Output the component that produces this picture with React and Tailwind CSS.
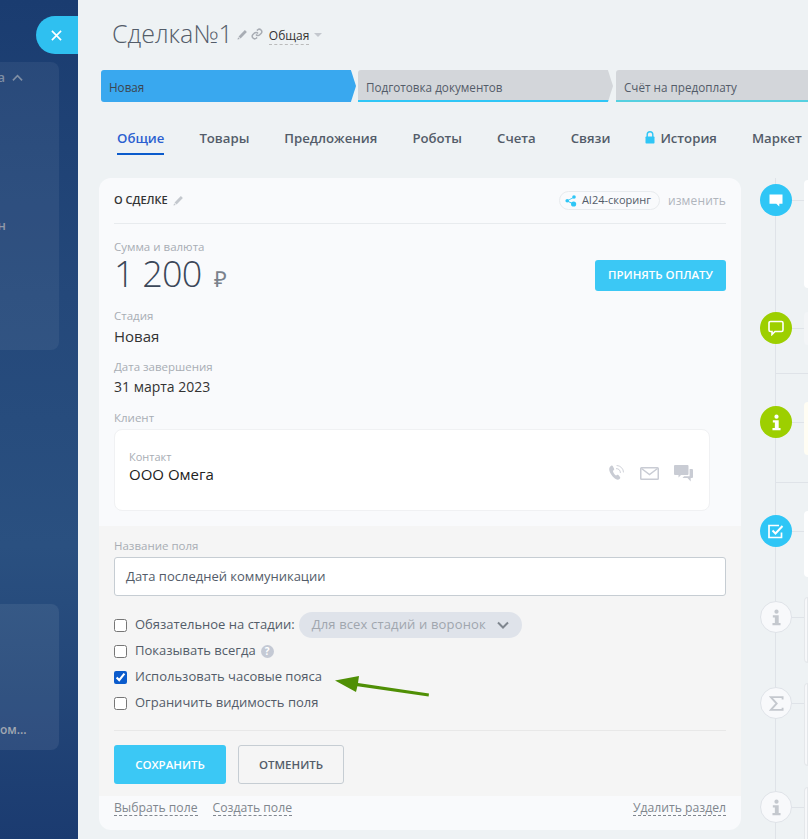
import React from "react";

const Pencil = ({ className }) => (
  <svg viewBox="0 0 12 12" className={className} fill="currentColor">
    <path d="M8.6 1.2l2.2 2.2-6.9 6.9-2.2-2.2zM1.2 8.9l1.9 1.9-2.6.7z" />
  </svg>
);

const Dot = ({ kind, tone }) => {
  const bg =
    tone === "blue"
      ? "bg-[#2fc6f6] text-white"
      : tone === "green"
      ? "bg-[#9dcf00] text-white"
      : "bg-[#f8f9fb] border border-[#dfe3e8] text-[#c4c8ce]";
  return (
    <div className={`relative z-10 w-8 h-8 shrink-0 rounded-full flex items-center justify-center ${bg}`}>
      {kind === "comment" && (
        <svg viewBox="0 0 14 13" className="w-[14px] h-[13px]" fill="currentColor">
          <path d="M0.5 0.5h13v9.3h-3.2v2.7l-3-2.7H0.5z" />
        </svg>
      )}
      {kind === "chat" && (
        <svg viewBox="0 0 16 16" className="w-4 h-4" fill="none" stroke="currentColor" strokeWidth="1.6">
          <path d="M2.5 1.5h11a1.5 1.5 0 0 1 1.5 1.5v7a1.5 1.5 0 0 1-1.5 1.5H7l-3 3v-3H2.5A1.5 1.5 0 0 1 1 10V3a1.5 1.5 0 0 1 1.5-1.5z" />
        </svg>
      )}
      {kind === "info" && (
        <svg viewBox="0 0 12 18" className="w-[11px] h-[17px]" fill="currentColor">
          <circle cx="6" cy="2.6" r="2.3" />
          <path d="M2 6.6h6.4v8.4H10.4v2.4H1.6v-2.4h2.6V9H2z" />
        </svg>
      )}
      {kind === "task" && (
        <svg viewBox="0 0 16 15" className="w-4 h-[15px]" fill="none" stroke="currentColor" strokeWidth="1.7">
          <path d="M13.5 8.5v5H1v-12h10" />
          <path d="M4.5 6.5l3 3 7-7.5" strokeWidth="2" />
        </svg>
      )}
      {kind === "sum" && (
        <svg viewBox="0 0 16 16" className="w-[15px] h-[15px]" fill="none" stroke="currentColor" strokeWidth="2">
          <path d="M14.5 3.6V1.2H2L8.2 8 2 14.8h12.5v-2.4" />
        </svg>
      )}
    </div>
  );
};

const TimeRow = ({ kind, tone, mt, h, card, dotMt }) => (
  <div className={`flex items-start ${mt} ${h}`}>
    <div className={`relative flex items-center ${dotMt}`}>
      <Dot kind={kind} tone={tone} />
      <div className="w-3 h-px bg-[#dfe3e8]" />
    </div>
    <div className={`flex-1 h-full rounded-l-xl ${card}`} />
  </div>
);

const Stage = ({ className, text, clip, line, textClass }) => (
  <div className={`relative h-8 shrink-0 ${clip} ${className}`}>
    <span className={`absolute left-2 top-[9px] text-[11.7px] leading-4 font-medium whitespace-nowrap ${textClass}`}>{text}</span>
    {line && <div className={`absolute left-0 right-0 bottom-0 h-[2px] ${line}`} />}
  </div>
);

const Check = ({ checked, children }) => (
  <label className="flex items-center h-[26px] text-[13px] text-[#535c69]">
    <input type="checkbox" defaultChecked={checked} className="w-[13px] h-[13px] m-0 mr-2 accent-[#0b5bcc]" />
    {children}
  </label>
);

const Dashed = ({ children, className = "" }) => (
  <span className={`text-[12.2px] leading-[15px] text-[#80868e] border-b border-dashed border-[#80868e] ${className}`}>{children}</span>
);

export default function App() {
  return (
    <div className="relative w-[808px] h-[839px] overflow-hidden flex bg-[#eef2f4] font-['Open_Sans',sans-serif]">
      {/* dark backdrop */}
      <aside className="relative w-[78px] h-full shrink-0 overflow-hidden bg-[linear-gradient(180deg,#1a3c70_0%,#24487a_35%,#2a5080_65%,#1b3b70_100%)]">
        <div className="absolute inset-0 [clip-path:polygon(100%_67.6%,100%_100%,0_100%,0_74%)] bg-[linear-gradient(180deg,rgba(255,255,255,0.09),rgba(255,255,255,0)_30%)]" />
        <div className="relative mt-[62px] w-[59px] h-[288px] rounded-r-lg bg-white/[0.06]">
          <div className="flex items-center h-4 pt-2 box-content text-[13px] font-semibold text-[#7f8ea4]">
            <span className="w-[5px] overflow-hidden flex justify-end">а</span>
            <svg viewBox="0 0 12 8" className="w-[11px] h-2 ml-[7px]" fill="none" stroke="#7f8ea4" strokeWidth="1.8">
              <path d="M1 6.5L6 1.5l5 5" />
            </svg>
          </div>
          <div className="mt-[129px] h-5 w-[6px] overflow-hidden flex justify-end text-[13px] font-semibold leading-5 text-[#8f99a8]">н</div>
        </div>
        <div className="relative mt-[254px] w-[59px] h-[146px] rounded-r-lg bg-white/[0.07] flex items-end pb-[10px]">
          <span className="text-[12px] leading-5 font-semibold text-[#a1a8b2]">ом...</span>
        </div>
      </aside>

      {/* close tab */}
      <div className="absolute left-[36px] top-4 w-[42px] h-[38px] rounded-l-full bg-[#2fc0f0] flex items-center justify-center pr-[1px]">
        <svg viewBox="0 0 12 12" className="w-[11px] h-[11px]" fill="none" stroke="white" strokeWidth="1.8">
          <path d="M1 1l10 10M11 1L1 11" />
        </svg>
      </div>

      <main className="flex-1 min-w-0 overflow-hidden">
        {/* title */}
        <div className="flex items-center h-[70px] pl-[34px] pb-[5px]">
          <h1 className="text-[25px] leading-9 font-light text-[#535c69]">Сделка№1</h1>
          <Pencil className="w-[11px] h-[11px] ml-[4px] mt-[3px] text-[#a8adb4]" />
          <svg viewBox="0 0 24 24" className="w-[12px] h-[12px] ml-[3px] mt-[3px]" fill="none" stroke="#a8adb4" strokeWidth="3">
            <path d="M10 13a5 5 0 0 0 7.5.5l3-3a5 5 0 0 0-7-7l-1.7 1.7" />
            <path d="M14 11a5 5 0 0 0-7.5-.5l-3 3a5 5 0 0 0 7 7l1.7-1.7" />
          </svg>
          <span className="ml-[6px] mt-[7px] text-[12px] leading-4 text-[#333] border-b border-dashed border-[#bbb]">Общая</span>
          <span className="ml-[5px] mt-[5px] w-0 h-0 border-x-[4px] border-x-transparent border-t-[4px] border-t-[#c4c8ce]" />
        </div>

        {/* stages */}
        <div className="flex pl-[23px] w-[800px]">
          <Stage text="Новая" textClass="text-[#3c4650]" className="w-[255px] bg-[#39a8ef] rounded-l-[3px]" clip="[clip-path:polygon(0_0,98%_0,100%_50%,98%_100%,0_100%)]" />
          <Stage text="Подготовка документов" textClass="text-[#535c69]" className="ml-[2px] w-[255px] bg-[#d3d6da] rounded-l-[3px]" clip="[clip-path:polygon(0_0,98%_0,100%_50%,98%_100%,0_100%)]" line="bg-[#2fc6f6]" />
          <Stage text="Счёт на предоплату" textClass="text-[#535c69]" className="ml-[3px] w-[220px] bg-[#d3d6da] rounded-l-[3px]" clip="" line="bg-[#55d0e0]" />
        </div>

        {/* tabs */}
        <nav className="flex items-start h-[76px] pl-[39px] pt-[26px] gap-[35px] text-[13.2px] leading-5 font-semibold text-[#535c69] whitespace-nowrap">
          <span className="relative text-[#2b5fd0] pb-[4px] border-b-2 border-[#0b5bcc] h-[27px]">Общие</span>
          <span>Товары</span>
          <span>Предложения</span>
          <span>Роботы</span>
          <span>Счета</span>
          <span>Связи</span>
          <span className="flex items-center">
            <svg viewBox="0 0 10 13" className="w-[10px] h-[13px] mr-[5px] -mt-[1px]">
              <path d="M2.2 6V3.6a2.8 2.8 0 0 1 5.6 0V6" fill="none" stroke="#2fc6f6" strokeWidth="1.4" />
              <rect x="0.5" y="5.5" width="9" height="7" rx="0.8" fill="#2fc6f6" />
            </svg>
            История
          </span>
          <span>Маркет</span>
        </nav>

        <div className="flex items-start pl-[21px]">
          {/* card */}
          <section className="w-[642px] h-[652px] shrink-0 rounded-xl bg-[#f9fafc] overflow-hidden flex flex-col">
            <div className="px-[15px]">
              <div className="flex items-center h-[46px] border-b border-[#e8ebee]">
                <span className="text-[11px] font-semibold text-[#333]">О СДЕЛКЕ</span>
                <Pencil className="w-[11px] h-[11px] ml-[6px] -translate-x-px text-[#c4c8ce]" />
                <div className="ml-auto flex items-center w-[101px] h-[19px] pl-[5px] rounded-full border border-[#e8ebee] text-[11px] font-medium text-[#535c69] whitespace-nowrap">
                  <svg viewBox="0 0 12 12" className="w-3 h-3 mr-[5px] shrink-0" fill="#2fc6f6">
                    <circle cx="2.2" cy="5.8" r="1.8" />
                    <circle cx="9" cy="2" r="1.8" />
                    <circle cx="8.6" cy="9" r="2.6" />
                    <path d="M2 5.4l7-3.6.4.7-7 3.6zM2.2 5.4l6.4 3.2-.4.8-6.4-3.2z" />
                  </svg>
                  AI24-скоринг
                </div>
                <span className="ml-2 text-[12px] text-[#b0b5bc] tracking-[0.15px]">изменить</span>
              </div>

              <div className="mt-[15px] text-[11.5px] leading-4 text-[#a8adb4]">Сумма и валюта</div>
              <div className="flex items-center justify-between h-[40px]">
                <div className="flex items-baseline">
                  <span className="text-[36px] leading-8 font-light tracking-[-0.8px] text-[#3b4759]">1 200</span>
                  <span className="ml-3 text-[22px] leading-6 text-[#7a828c] font-['Liberation_Sans',sans-serif]">₽</span>
                </div>
                <button className="w-[131px] h-[31px] rounded-[3px] bg-[#3bc8f5] text-white text-[11.5px] font-semibold">ПРИНЯТЬ ОПЛАТУ</button>
              </div>

              <div className="mt-[13px] text-[11.5px] leading-4 text-[#a8adb4]">Стадия</div>
              <div className="mt-[2px] text-[15px] leading-5 text-[#333]">Новая</div>
              <div className="mt-[13px] text-[11.5px] leading-4 text-[#a8adb4]">Дата завершения</div>
              <div className="mt-[2px] text-[14px] leading-5 text-[#333]">31 марта 2023</div>
              <div className="mt-[13px] text-[11.5px] leading-4 text-[#a8adb4]">Клиент</div>

              <div className="mt-[3px] w-[596px] h-[82px] rounded-lg bg-white border border-[#f0f1f3] flex items-center justify-between pl-[14px] pr-[16px]">
                <div className="-mt-[6px]">
                  <div className="text-[11px] leading-[14px] text-[#a8adb4]">Контакт</div>
                  <div className="text-[15px] leading-5 text-[#222]">ООО Омега</div>
                </div>
                <div className="flex items-center gap-[15px] text-[#c9ccd4] mt-[6px]">
                  <svg viewBox="0 0 18 18" className="w-[18px] h-[18px]" fill="currentColor">
                    <path d="M4.2 1.8c.8-.4 1.3-.2 1.7.5l1.2 2.4c.3.6.2 1-.3 1.4l-.9.8c.3 1.6 1.6 3.8 3.1 4.7l1-.7c.5-.3 1-.3 1.4.2l1.6 2c.4.6.4 1.1-.2 1.6-1 .9-2.3 1.3-3.7.5C5.9 13.3 3 9.3 2.3 6.2 1.9 4.3 2.8 2.6 4.2 1.8z" />
                    <path d="M9 4.6a4.5 4.5 0 0 1 4.4 4.4M9.6 1.5a7 7 0 0 1 6.9 6.9" fill="none" stroke="currentColor" strokeWidth="0.9" />
                  </svg>
                  <svg viewBox="0 0 19 13" className="w-[19px] h-[13px]" fill="none" stroke="currentColor" strokeWidth="1.5">
                    <rect x="0.75" y="0.75" width="17.5" height="11.5" rx="0.8" />
                    <path d="M1.5 1.5l8 6 8-6" />
                  </svg>
                  <svg viewBox="0 0 19 17" className="w-[19px] h-[17px]" fill="currentColor">
                    <path d="M1 0h12.5a1 1 0 0 1 1 1v8a1 1 0 0 1-1 1H7l-2.5 2.5V10H1a1 1 0 0 1-1-1V1a1 1 0 0 1 1-1z" />
                    <path d="M15.6 4H18a1 1 0 0 1 1 1v7a1 1 0 0 1-1 1h-1.3v3.5L13.5 13H8.5l1.6-1.8h5.5z" />
                  </svg>
                </div>
              </div>
            </div>

            {/* edit form */}
            <div className="relative mt-[15px] h-[270px] shrink-0 bg-[#f5f5f5] px-[15px] pt-[12px]">
              <div className="text-[11.5px] leading-4 text-[#a8adb4]">Название поля</div>
              <div className="mt-[3px] h-[39px] rounded-[3px] border border-[#c6cdd3] bg-white flex items-center pl-[11px] text-[13px] text-[#535c69]">Дата последней коммуникации</div>
              <div className="mt-[16px]">
                <Check>
                  Обязательное на стадии:
                  <span className="ml-[4px] w-[223px] h-[26px] rounded-full bg-[#dfe3ea] flex items-center pl-[13px] pr-[13px] justify-between text-[#a0a6ae] tracking-[0.15px]">
                    Для всех стадий и воронок
                    <svg viewBox="0 0 12 8" className="w-3 h-2" fill="none" stroke="#7f868f" strokeWidth="2">
                      <path d="M1 1.5l5 5 5-5" />
                    </svg>
                  </span>
                </Check>
                <Check>
                  Показывать всегда
                  <span className="ml-[5px] w-[13px] h-[13px] rounded-full bg-[#c4c9d4] text-white text-[10px] leading-[13px] font-bold text-center">?</span>
                </Check>
                <Check checked>Использовать часовые пояса</Check>
                <Check>Ограничить видимость поля</Check>
              </div>
              <svg viewBox="0 0 100 22" className="absolute left-[236px] top-[150px] w-[100px] h-[22px]" fill="#4f8f05" stroke="none">
                <path d="M0 4.5L24 0l-1 7L94 17.4l-.4 3L22.4 10.2 21 16z" />
              </svg>
              <div className="mt-[14px] h-px bg-[#e8e8e8]" />
              <div className="mt-[14px] flex gap-3">
                <button className="w-[112px] h-[39px] rounded-[3px] bg-[#3bc8f5] text-white text-[11.5px] font-semibold">СОХРАНИТЬ</button>
                <button className="w-[106px] h-[39px] rounded-[3px] border border-[#c6cdd3] text-[#535c69] text-[11.5px] font-semibold">ОТМЕНИТЬ</button>
              </div>
            </div>

            <div className="flex items-start px-[15px] pt-[4px] gap-[15px]">
              <Dashed>Выбрать поле</Dashed>
              <Dashed>Создать поле</Dashed>
              <Dashed className="ml-auto">Удалить раздел</Dashed>
            </div>
          </section>

          {/* timeline */}
          <div className="relative flex-1 min-w-0 pl-[19px]">
            <div className="absolute left-[34px] top-0 bottom-0 w-px bg-[#dfe3e8]" />
            <TimeRow kind="comment" tone="blue" mt="mt-[2px]" h="h-[108px]" dotMt="mt-[4px]" card="bg-white" />
            <TimeRow kind="chat" tone="green" mt="mt-[24px]" h="h-[33px]" dotMt="" card="bg-[#f3f5f7]" />
            <div className="ml-[16px] mt-[28px] h-px bg-[#dfe3e8]" />
            <TimeRow kind="info" tone="green" mt="mt-[28px]" h="h-[53px]" dotMt="mt-[4px]" card="bg-[#fffdf3]" />
            <div className="ml-[16px] mt-[27px] h-px bg-[#dfe3e8]" />
            <TimeRow kind="task" tone="blue" mt="mt-[28px]" h="h-[66px]" dotMt="mt-[4px]" card="bg-white" />
            <TimeRow kind="info" tone="gray" mt="mt-[20px]" h="h-[66px]" dotMt="mt-[4px]" card="bg-[#f7f8fa] border border-[#e4e7ea]" />
            <TimeRow kind="sum" tone="gray" mt="mt-[20px]" h="h-[83px]" dotMt="mt-[4px]" card="bg-[#f7f8fa] border border-[#e4e7ea]" />
            <TimeRow kind="info" tone="gray" mt="mt-[21px]" h="h-[60px]" dotMt="mt-[4px]" card="bg-[#f7f8fa] border border-[#e4e7ea]" />
          </div>
        </div>
      </main>
    </div>
  );
}
